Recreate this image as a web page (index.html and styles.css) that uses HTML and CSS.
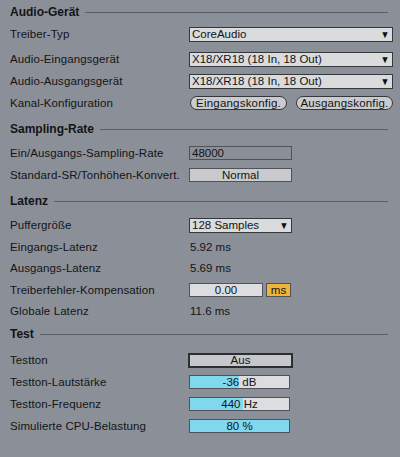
FILE: index.html
```html
<!DOCTYPE html>
<html lang="de">
<head>
<meta charset="utf-8">
<link rel="stylesheet" href="styles.css">
</head>
<body>
<div class="panel">
  <div class="heading first"><span>Audio-Gerät</span><i class="rule"></i></div>
  <div class="row gap3"><span class="label">Treiber-Typ</span><div class="ctrl"><div class="select wide"><span>CoreAudio</span><b class="tri">▼</b></div></div></div>
  <div class="row"><span class="label">Audio-Eingangsgerät</span><div class="ctrl"><div class="select wide"><span>X18/XR18 (18 In, 18 Out)</span><b class="tri">▼</b></div></div></div>
  <div class="row"><span class="label">Audio-Ausgangsgerät</span><div class="ctrl"><div class="select wide"><span>X18/XR18 (18 In, 18 Out)</span><b class="tri">▼</b></div></div></div>
  <div class="row"><span class="label">Kanal-Konfiguration</span><div class="ctrl pills"><div class="pill">Eingangskonfig.</div><div class="pill">Ausgangskonfig.</div></div></div>

  <div class="heading"><span>Sampling-Rate</span><i class="rule"></i></div>
  <div class="row"><span class="label">Ein/Ausgangs-Sampling-Rate</span><div class="ctrl"><div class="box plain">48000</div></div></div>
  <div class="row"><span class="label">Standard-SR/Tonhöhen-Konvert.</span><div class="ctrl"><div class="box grey center">Normal</div></div></div>

  <div class="heading"><span>Latenz</span><i class="rule"></i></div>
  <div class="row"><span class="label">Puffergröße</span><div class="ctrl"><div class="select narrow"><span>128 Samples</span><b class="tri">▼</b></div></div></div>
  <div class="row h21"><span class="label">Eingangs-Latenz</span><div class="ctrl"><span class="value">5.92 ms</span></div></div>
  <div class="row"><span class="label">Ausgangs-Latenz</span><div class="ctrl"><span class="value">5.69 ms</span></div></div>
  <div class="row"><span class="label">Treiberfehler-Kompensation</span><div class="ctrl comp"><div class="box light center num">0.00</div><div class="unit">ms</div></div></div>
  <div class="row h20"><span class="label">Globale Latenz</span><div class="ctrl"><span class="value">11.6 ms</span></div></div>

  <div class="heading tight"><span>Test</span><i class="rule"></i></div>
  <div class="row"><span class="label">Testton</span><div class="ctrl"><div class="box toggle center">Aus</div></div></div>
  <div class="row"><span class="label">Testton-Lautstärke</span><div class="ctrl"><div class="slider"><div class="fill" style="width:49%"></div><span class="stext">-36 dB</span></div></div></div>
  <div class="row"><span class="label">Testton-Frequenz</span><div class="ctrl"><div class="slider"><div class="fill" style="width:54%"></div><span class="stext">440 Hz</span></div></div></div>
  <div class="row"><span class="label">Simulierte CPU-Belastung</span><div class="ctrl"><div class="slider"><div class="fill" style="width:100%"></div><span class="stext">80 %</span></div></div></div>
</div>
</body>
</html>
```

FILE: styles.css
```css
html, body {
  margin: 0;
  padding: 0;
  background: #8b9098;
}
body {
  width: 400px;
  height: 457px;
  overflow: hidden;
  font-family: "Liberation Sans", Arial, sans-serif;
  font-size: 11.5px;
  color: #131416;
}
.panel {
  padding: 1px 8px 0 10px;
}
.heading {
  display: flex;
  align-items: center;
  height: 22px;
  margin-top: 4px;
  margin-bottom: 2px;
  font-weight: bold;
  font-size: 12px;
}
.heading.first {
  margin-top: 0;
  margin-bottom: 0;
}
.heading.tight {
  margin-top: 2px;
  margin-bottom: 4px;
}
.rule {
  flex: 1;
  height: 1px;
  background: #595d64;
  margin-left: 6px;
  margin-right: 4px;
}
.row {
  display: flex;
  align-items: center;
  height: 22px;
}
.row.gap3 { margin-bottom: 3px; }
.row.h21 { height: 21px; }
.row.h20 { height: 20px; }
.label {
  width: 179px;
  flex: none;
  letter-spacing: 0.1px;
}
.ctrl {
  display: flex;
  align-items: center;
  flex: 1;
}
.select {
  display: flex;
  align-items: center;
  justify-content: space-between;
  height: 13px;
  background: #dadbdd;
  border: 1px solid #34373b;
  padding: 0 2px 0 2px;
}
.select.wide { width: 198px; }
.select.narrow { width: 97px; }
.tri {
  font-size: 10px;
  font-weight: normal;
  color: #0e0f10;
  transform: scaleX(0.9);
}
.pills {
  gap: 9px;
  padding-left: 1px;
}
.pill {
  width: 95px;
  height: 12px;
  line-height: 12px;
  border: 1px solid #34373b;
  border-radius: 7px;
  background: #c9cbce;
  text-align: center;
  letter-spacing: 0.2px;
}
.box {
  width: 99px;
  height: 12px;
  line-height: 12px;
  border: 1px solid #4f5358;
  padding: 0 2px;
  box-sizing: content-box;
}
.box.plain {
  width: 97px;
  background: transparent;
}
.box.grey {
  width: 97px;
  background: #c8cacd;
}
.center { text-align: center; }
.box.light {
  width: 68px;
  background: #dcdde0;
}
.box.toggle {
  width: 97px;
  height: 11px;
  line-height: 11px;
  border: 2px solid #2c2e31;
  background: #c6c8cb;
  margin-left: -1px;
}
.comp { gap: 3px; }
.unit {
  width: 23px;
  height: 12px;
  line-height: 12px;
  border: 1px solid #4f5358;
  background: #f0b43a;
  text-align: center;
}
.value {
  padding-left: 1px;
}
.slider {
  position: relative;
  width: 99px;
  height: 12px;
  border: 1px solid #4f5358;
  background: #dcdde0;
}
.fill {
  height: 100%;
  background: #80d8ee;
}
.stext {
  position: absolute;
  left: 0;
  right: 0;
  top: 0;
  line-height: 12px;
  text-align: center;
}
```
